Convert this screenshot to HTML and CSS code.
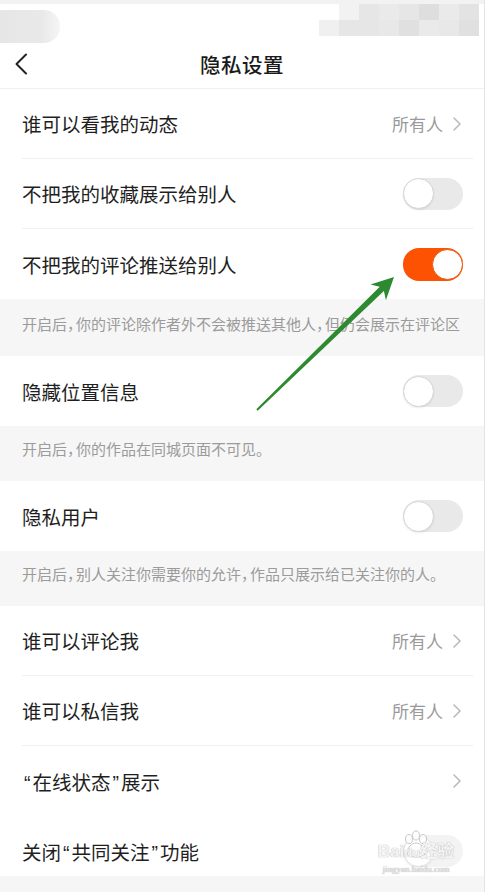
FILE: index.html
```html
<!DOCTYPE html>
<html lang="zh-CN">
<head>
<meta charset="utf-8">
<title>隐私设置</title>
<link rel="stylesheet" href="styles.css">
</head>
<body>
<div class="page">
  <div class="status">
    <div class="blob-left"></div>
    <div class="pix">
      <div class="pix-row r1">
        <i style="background:#f2f2f2"></i><i style="background:#e6e6e6"></i><i style="background:#eaeaea"></i><i style="background:#e6e6e6"></i><i style="background:#dedede"></i><i style="background:#eaeaea"></i><i style="background:#e3e3e3"></i>
      </div>
      <div class="pix-row r2">
        <i style="background:#f0f0f0"></i><i style="background:#e6e6e6"></i><i style="background:#e6e6e6"></i><i style="background:#e8e8e8"></i><i style="background:#e0e0e0"></i><i style="background:#eaeaea"></i><i style="background:#e8e8e8"></i><i style="background:#e0e0e0"></i>
      </div>
    </div>
  </div>

  <div class="nav">
    <svg class="back" width="14" height="22" viewBox="0 0 14 22"><path d="M12 1.5 L2.5 11 L12 20.5" fill="none" stroke="#222" stroke-width="2" stroke-linecap="round" stroke-linejoin="round"/></svg>
    <div class="title">隐私设置</div>
    <span class="nav-spacer"></span>
  </div>

  <div class="group">
    <div class="row line"><span class="label">谁可以看我的动态</span><span class="value">所有人<svg class="chev" width="8" height="14" viewBox="0 0 8 14"><path d="M1 1 L7 7 L1 13" fill="none" stroke="#bbb" stroke-width="1.6" stroke-linecap="round" stroke-linejoin="round"/></svg></span></div>
    <div class="row line"><span class="label">不把我的收藏展示给别人</span><span class="switch"><span class="knob"></span></span></div>
    <div class="row"><span class="label">不把我的评论推送给别人</span><span class="switch on"><span class="knob"></span></span></div>
  </div>
  <div class="note first">开启后<span class="c">，</span>你的评论除作者外不会被推送其他人<span class="c">，</span>但仍会展示在评论区</div>

  <div class="group">
    <div class="row"><span class="label">隐藏位置信息</span><span class="switch"><span class="knob"></span></span></div>
  </div>
  <div class="note">开启后<span class="c">，</span>你的作品在同城页面不可见。</div>

  <div class="group">
    <div class="row"><span class="label">隐私用户</span><span class="switch"><span class="knob"></span></span></div>
  </div>
  <div class="note">开启后<span class="c">，</span>别人关注你需要你的允许<span class="c">，</span>作品只展示给已关注你的人。</div>

  <div class="group">
    <div class="row line"><span class="label">谁可以评论我</span><span class="value">所有人<svg class="chev" width="8" height="14" viewBox="0 0 8 14"><path d="M1 1 L7 7 L1 13" fill="none" stroke="#bbb" stroke-width="1.6" stroke-linecap="round" stroke-linejoin="round"/></svg></span></div>
    <div class="row line"><span class="label">谁可以私信我</span><span class="value">所有人<svg class="chev" width="8" height="14" viewBox="0 0 8 14"><path d="M1 1 L7 7 L1 13" fill="none" stroke="#bbb" stroke-width="1.6" stroke-linecap="round" stroke-linejoin="round"/></svg></span></div>
    <div class="row"><span class="label"><span class="q">“</span>在线状态<span class="q">”</span>展示</span><span class="value"><svg class="chev" width="8" height="14" viewBox="0 0 8 14"><path d="M1 1 L7 7 L1 13" fill="none" stroke="#bbb" stroke-width="1.6" stroke-linecap="round" stroke-linejoin="round"/></svg></span></div>
    <div class="row last"><span class="label">关闭<span class="q">“</span>共同关注<span class="q">”</span>功能</span><span class="switch faint"><span class="knob"></span></span></div>
  </div>
  <div class="bottom"></div>

  <svg class="arrow" width="486" height="892" viewBox="0 0 486 892">
    <polygon points="256.3,409.3 379.7,286.7 370.5,284.4 394,277 385.9,300.2 383.9,290.95 257.7,410.7" fill="#2e8a30"/>
  </svg>

  <div class="watermark">
    <svg class="wm-paw" width="30" height="30" viewBox="0 0 30 30">
      <g fill="rgba(255,255,255,0.85)" stroke="#c8c8c8" stroke-width="1">
        <ellipse cx="8" cy="9" rx="3.5" ry="4.5"/>
        <ellipse cx="15" cy="5.5" rx="3.5" ry="4.5"/>
        <ellipse cx="22" cy="9" rx="3.5" ry="4.5"/>
        <path d="M6 24 C6 17 11 13 15 13 C19 13 24 17 24 24 C24 28 6 28 6 24 Z"/>
      </g>
    </svg>
    <div class="wm-main">Bai<span class="paw">du</span>经验</div>
    <div class="wm-sub">jingyan.baidu.com</div>
  </div>
</div>
</body>
</html>
```

FILE: styles.css
```css
html, body {
  margin: 0;
  padding: 0;
  background: #fff;
}
body {
  font-family: "Noto Sans CJK SC", "Noto Sans", sans-serif;
  color: #222;
}
.page {
  position: relative;
  width: 484px;
  height: 892px;
  overflow: hidden;
  border-right: 1px solid #e4e4e4;
  background: #fff;
}
.status {
  height: 43px;
  display: flex;
  justify-content: space-between;
  align-items: flex-start;
  border-top: 4px solid #f2f2f2;
  box-sizing: border-box;
}
.blob-left {
  margin-top: 6px;
  width: 60px;
  height: 33px;
  background: linear-gradient(90deg, #e6e6e6 0, #e9e9e9 70%, #f5f5f5 100%);
  border-radius: 0 16px 16px 0;
}
.pix {
  display: flex;
  flex-direction: column;
  align-items: flex-end;
  margin-right: 5px;
}
.pix-row {
  display: flex;
}
.pix-row i {
  display: block;
  width: 20px;
  height: 16px;
}
.nav {
  height: 46px;
  display: flex;
  align-items: center;
  justify-content: space-between;
  padding: 0 14px 3px;
  box-sizing: border-box;
  border-bottom: 1px solid #f0f0f0;
}
.back {
  display: block;
}
.nav-spacer {
  width: 14px;
}
.title {
  font-size: 20.5px;
  font-weight: 500;
  color: #1a1a1a;
  letter-spacing: 0.5px;
}
.group {
  background: #fff;
}
.row {
  height: 70px;
  box-sizing: border-box;
  margin: 0 11px 0 22px;
  padding-right: 10px;
  display: flex;
  align-items: center;
  justify-content: space-between;
}
.row.line {
  border-bottom: 1px solid #f0f0f0;
}
.row.last {
  height: 60px;
  padding-top: 10px;
}
.label {
  font-size: 19.5px;
  color: #1f1f1f;
  white-space: nowrap;
}
.q {
  font-family: "Liberation Sans", sans-serif;
  padding: 0 2px;
}
.value {
  display: flex;
  align-items: center;
  gap: 10px;
  font-size: 17px;
  color: #9a9a9a;
}
.chev {
  display: block;
  margin-right: 2px;
}
.switch {
  width: 60px;
  height: 32px;
  border-radius: 16px;
  background: #e9e9e9;
  display: flex;
  align-items: center;
  box-sizing: border-box;
}
.switch .knob {
  width: 31px;
  height: 31px;
  border-radius: 50%;
  background: #fff;
  border: 1px solid #d6d6d6;
  box-sizing: border-box;
  box-shadow: 0 1px 2px rgba(0,0,0,0.08);
}
.switch.on {
  background: #fe5203;
  justify-content: flex-end;
  height: 33px;
}
.switch.on .knob {
  border-color: #e9590f;
  box-shadow: none;
}
.switch.faint {
  background: #efefef;
  opacity: 0.7;
}
.note {
  background: #f6f6f6;
  height: 55px;
  box-sizing: border-box;
  padding: 12px 0 0 22px;
  font-size: 15px;
  line-height: 22px;
  color: #9b9b9b;
  white-space: nowrap;
}
.note .c {
  letter-spacing: -6px;
  margin-right: 0;
}
.note.first {
  height: 57px;
  padding-top: 14px;
}
.bottom {
  background: #f6f6f6;
  height: 40px;
}
.arrow {
  position: absolute;
  left: 0;
  top: 0;
  pointer-events: none;
}
.watermark {
  position: absolute;
  left: 366px;
  top: 834px;
  width: 100px;
  text-align: center;
  color: rgba(255,255,255,0.85);
  text-shadow: 0 0 1px #bdbdbd, 0 0 1px #bdbdbd;
  font-family: "Liberation Sans", "Noto Sans CJK SC", sans-serif;
}
.wm-paw {
  position: absolute;
  left: 35px;
  top: -4px;
}
.wm-main {
  position: relative;
  padding-top: 8px;
  font-size: 17px;
  font-weight: 700;
  line-height: 20px;
  white-space: nowrap;
}
.paw {
  font-size: 13px;
}
.wm-sub {
  position: relative;
  font-size: 9px;
  line-height: 12px;
  color: rgba(230,230,230,0.9);
  font-family: "Liberation Serif", serif;
}
```
